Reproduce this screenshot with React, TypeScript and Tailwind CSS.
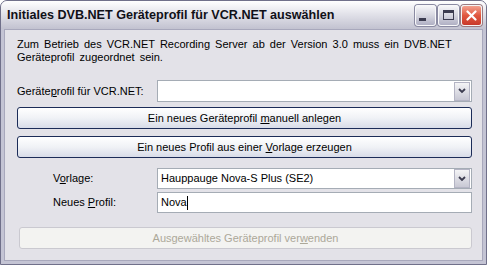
function TitleButton({ kind }: { kind: "min" | "max" | "close" }) {
  if (kind === "close") {
    return (
      <div className="w-[21px] h-[21px] rounded-[3px] border border-[#f4f4f4] bg-gradient-to-b from-[#f2a08e] via-[#e0573f] to-[#c8392b] flex items-center justify-center shadow-[0_0_0_1px_#9a7a80]">
        <svg width="11" height="11" viewBox="0 0 11 11">
          <path d="M1.5 1.5 L9.5 9.5 M9.5 1.5 L1.5 9.5" stroke="#fff" strokeWidth="2.2" strokeLinecap="round" />
        </svg>
      </div>
    );
  }
  return (
    <div className="w-[21px] h-[21px] rounded-[3px] border border-[#f8f8fa] bg-gradient-to-b from-[#f6f6f9] via-[#d6d6e0] to-[#b0b0c4] flex items-center justify-center shadow-[0_0_0_1px_#8a8aa2]">
      {kind === "min" ? (
        <div className="w-[7px] h-[3px] bg-[#3c3c50] mt-[9px] -ml-[6px]" />
      ) : (
        <div className="w-[11px] h-[10px] border border-[#3c3c50] border-t-[3px]" />
      )}
    </div>
  );
}

function Combo({ value }: { value?: string }) {
  return (
    <div className="flex-1 h-full bg-white border border-[#a5acb5] flex items-center">
      <span className="flex-1 pl-[3px] text-black">{value}</span>
      <div className="w-[16px] h-[19px] mr-[1px] bg-gradient-to-b from-[#f4f4f6] to-[#c8c8d4] border border-[#b4b4c4] flex items-center justify-center">
        <svg width="8" height="6" viewBox="0 0 8 6">
          <path d="M1 1 L4 4 L7 1" stroke="#3c3c50" strokeWidth="1.8" fill="none" />
        </svg>
      </div>
    </div>
  );
}

function Button({ children }: { children: React.ReactNode }) {
  return (
    <div className="h-[22px] rounded-[3px] border border-[#1c2c58] bg-gradient-to-b from-[#ffffff] via-[#f0f2f6] to-[#d8dce8] flex items-center justify-center text-black">
      {children}
    </div>
  );
}

export default function App() {
  return (
    <div
      className="w-[487px] h-[265px] flex flex-col rounded-t-[7px] bg-[#c4c4d4] border border-[#70708a] overflow-hidden"
      style={{ fontFamily: '"Liberation Sans", Arial, sans-serif' }}
    >
      <div className="h-[28px] shrink-0 flex items-center bg-gradient-to-b from-[#ffffff] via-[#e0e0e8] to-[#c2c2d0] pl-[6px] pr-[4px]">
        <span className="flex-1 text-[12.6px] font-bold text-[#101018]">
          Initiales DVB.NET Geräteprofil für VCR.NET auswählen
        </span>
        <div className="flex gap-[2px]">
          <TitleButton kind="min" />
          <TitleButton kind="max" />
          <TitleButton kind="close" />
        </div>
      </div>
      <div className="flex-1 mx-[3px] mb-[3px] bg-[#e3e2e8] border border-[#a8a8bc] pl-[12px] pr-[10px] pt-[8px] text-[11px] text-black leading-[13px]">
        <p className="w-[450px] leading-[13px] [word-spacing:2px]">
          Zum Betrieb des VCR.NET Recording Server ab der Version 3.0 muss ein DVB.NET Geräteprofil zugeordnet sein.
        </p>
        <div className="flex items-center h-[22px] mt-[16px]">
          <span className="w-[140px]">
            Geräte<u>p</u>rofil für VCR.NET:
          </span>
          <Combo />
        </div>
        <div className="mt-[5px]">
          <Button>
            <span>
              Ein neues Geräteprofil <u>m</u>anuell anlegen
            </span>
          </Button>
        </div>
        <div className="mt-[7px]">
          <Button>
            <span>
              Ein neues Profil aus einer <u>V</u>orlage erzeugen
            </span>
          </Button>
        </div>
        <div className="flex items-center h-[21px] mt-[10px]">
          <span className="w-[104px] pl-[36px] box-content">
            V<u>o</u>rlage:
          </span>
          <Combo value="Hauppauge Nova-S Plus (SE2)" />
        </div>
        <div className="flex items-center h-[21px] mt-[3px]">
          <span className="w-[104px] pl-[36px] box-content">
            Neues <u>P</u>rofil:
          </span>
          <div className="flex-1 h-full bg-white border border-[#a5acb5] flex items-center pl-[3px]">
            <span>Nova</span>
            <span className="w-[1px] h-[14px] bg-black" />
          </div>
        </div>
        <div className="mt-[14px] ml-[2px] h-[22px] rounded-[3px] border border-[#cac9d0] bg-[#f3f3f1] flex items-center justify-center text-[#aca899]">
          <span>
            Ausgewähltes Geräteprofil ver<u>w</u>enden
          </span>
        </div>
      </div>
    </div>
  );
}
